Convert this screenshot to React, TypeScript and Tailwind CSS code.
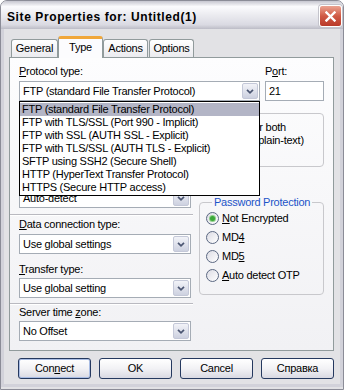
import React from "react";

const protocols = [
  "FTP (standard File Transfer Protocol)",
  "FTP with TLS/SSL (Port 990 - Implicit)",
  "FTP with SSL (AUTH SSL - Explicit)",
  "FTP with TLS/SSL (AUTH TLS - Explicit)",
  "SFTP using SSH2 (Secure Shell)",
  "HTTP (HyperText Transfer Protocol)",
  "HTTPS (Secure HTTP access)",
];

const tabs = ["General", "Type", "Actions", "Options"];

function Chevron() {
  return (
    <svg width="8" height="5" viewBox="0 0 8 5">
      <path d="M1 0.8l3 3 3-3" fill="none" stroke="#4b5672" strokeWidth="1.7" />
    </svg>
  );
}

function Combo({ value, className }: { value: string; className: string }) {
  return (
    <div className={`flex h-[20px] border border-[#a5acb5] bg-white ${className}`}>
      <div className="flex-1 truncate pl-[3px] leading-[18px]">{value}</div>
      <div className="m-[1px] flex w-[16px] items-center justify-center rounded-[2px] border border-[#c4c8d8] bg-linear-to-b from-[#f2f3f8] to-[#cdd1e0]">
        <Chevron />
      </div>
    </div>
  );
}

function Label({ children, className = "" }: { children: React.ReactNode; className?: string }) {
  return <div className={`h-[13px] leading-[13px] ${className}`}>{children}</div>;
}

function Separator({ className = "" }: { className?: string }) {
  return <div className={`h-[2px] w-[183px] border-t border-b border-t-[#b9b9c0] border-b-white ${className}`} />;
}

function Radio({ checked, children }: { checked?: boolean; children: React.ReactNode }) {
  return (
    <div className="flex h-[19px] items-center gap-[3px]">
      <div className="flex h-[13px] w-[13px] items-center justify-center rounded-full border border-[#5b6882] bg-linear-to-br from-[#dcdce4] to-white">
        {checked && <div className="h-[5px] w-[5px] rounded-full bg-[#3ca83a] shadow-[0_0_0_1px_#8fd08a]" />}
      </div>
      <span className="leading-[13px]">{children}</span>
    </div>
  );
}

function Button({ children, primary }: { children: React.ReactNode; primary?: boolean }) {
  return (
    <button
      className={`flex h-[21px] w-[73px] items-center justify-center rounded-[3px] border border-[#25395f] bg-linear-to-b from-white via-[#f2f2f5] to-[#d9d9e2] leading-[13px] ${
        primary ? "shadow-[inset_0_0_0_1px_#a9bde4]" : ""
      }`}
    >
      {children}
    </button>
  );
}

export default function App() {
  return (
    <div className="h-[390px] w-[344px] overflow-hidden rounded-t-[7px] border border-[#8b8c97] bg-[#e2e2e5] font-['Liberation_Sans',Arial,sans-serif] text-[11px] tracking-[-0.25px] text-black">
      {/* title bar */}
      <div className="flex h-[28px] items-start bg-[linear-gradient(to_bottom,#c6c6d0_0%,#fbfbfd_20%,#ebebf0_50%,#dadae2_85%,#bcbcc6_100%)] pl-[6px]">
        <div className="pt-[9px] text-[12px] font-bold leading-[14px] tracking-[0.6px]">
          Site Properties for: Untitled(1)
        </div>
        <div className="mt-[4px] mr-[1px] ml-auto flex h-[22px] w-[23px] items-center justify-center rounded-[3px] border border-white bg-linear-to-b from-[#eba391] via-[#d05a45] to-[#b9392a] shadow-[0_0_0_1px_#c4c4cc]">
          <svg width="11" height="11" viewBox="0 0 11 11">
            <path d="M1.5 1.5l8 8M9.5 1.5l-8 8" stroke="white" strokeWidth="2.4" strokeLinecap="square" />
          </svg>
        </div>
      </div>

      {/* body */}
      <div className="h-[358px] border-x-[3px] border-b-[3px] border-[#d2d2da] px-[5px] pt-[7px]">
        {/* tabs */}
        <div className="flex h-[21px] items-end pl-[2px]">
          {tabs.map((t) =>
            t === "Type" ? (
              <div
                key={t}
                className="relative z-10 -mb-[1px] flex h-[22px] w-[45px] items-center justify-center rounded-t-[3px] border-x border-t-[3px] border-x-[#919b9c] border-t-[#f0a73a] bg-[#fcfcfe] pb-[2px]"
              >
                {t}
              </div>
            ) : (
              <div
                key={t}
                className={`flex h-[18px] items-center justify-center rounded-t-[3px] border-x border-t border-[#919b9c] bg-linear-to-b from-white to-[#ebebef] ${
                  t === "General" ? "w-[47px]" : t === "Actions" ? "w-[45px]" : "ml-[1px] w-[45px]"
                }`}
              >
                {t}
              </div>
            )
          )}
        </div>

        {/* panel */}
        <div className="h-[294px] w-[325px] border border-[#919b9c] bg-linear-to-b from-[#fdfdfe] to-[#f1f1f4] pt-[7px]">
          <div className="flex gap-[5px] px-[9px]">
            <div>
              <Label className="mb-[3px]">
                <u>P</u>rotocol type:
              </Label>
              <div className="relative z-20">
                <Combo value="FTP (standard File Transfer Protocol)" className="w-[241px]" />
                <div className="absolute top-full left-0 w-[241px] border border-black bg-white py-[1px]">
                  {protocols.map((p, i) => (
                    <div
                      key={p}
                      className={`h-[13px] truncate pl-[2px] leading-[13px] ${i === 0 ? "bg-[#b3b5c6]" : ""}`}
                    >
                      {p}
                    </div>
                  ))}
                </div>
              </div>
            </div>
            <div>
              <Label className="mb-[3px]">
                P<u>o</u>rt:
              </Label>
              <div className="h-[20px] w-[59px] border border-[#a5acb5] bg-white pl-[3px] leading-[18px]">21</div>
            </div>
          </div>

          <div className="flex">
            {/* left column */}
            <div className="w-[183px]">
              <Combo value="Auto-detect" className="mt-[87px] ml-[9px] w-[172px]" />
              <Separator className="mt-[6px]" />
              <Label className="mt-[2px] mb-[3px] ml-[9px]">
                <u>D</u>ata connection type:
              </Label>
              <Combo value="Use global settings" className="ml-[9px] w-[172px]" />
              <Label className="mt-[9px] mb-[2px] ml-[9px]">
                <u>T</u>ransfer type:
              </Label>
              <Combo value="Use global setting" className="ml-[9px] w-[172px]" />
              <Separator className="mt-[5px]" />
              <Label className="mt-[1px] mb-[2px] ml-[9px]">
                Server time <u>z</u>one:
              </Label>
              <Combo value="No Offset" className="ml-[9px] w-[172px]" />
            </div>

            {/* right column */}
            <div className="ml-[6px] w-[125px]">
              <div className="mt-[12px] h-[54px] rounded-[4px] border border-[#c8c8cc] pt-[7px] pl-[4px] leading-[13px]">
                <div>Encoding for both</div>
                <div className="ml-[6px]">channels (plain-text)</div>
              </div>
              <fieldset className="mt-[29px] rounded-[4px] border border-[#c8c8cc] pb-[9px] pl-[6px]">
                <legend className="ml-[6px] px-[2px] leading-[13px] text-[#1c54c8]">Password Protection</legend>
                <Radio checked>
                  <u>N</u>ot Encrypted
                </Radio>
                <Radio>
                  MD<u>4</u>
                </Radio>
                <Radio>
                  MD<u>5</u>
                </Radio>
                <Radio>
                  <u>A</u>uto detect OTP
                </Radio>
              </fieldset>
            </div>
          </div>
        </div>

        {/* buttons */}
        <div className="mt-[7px] flex gap-[8px] pl-[9px]">
          <Button primary>
            Con<u>n</u>ect
          </Button>
          <Button>OK</Button>
          <Button>Cancel</Button>
          <Button>Справка</Button>
        </div>
      </div>
    </div>
  );
}
